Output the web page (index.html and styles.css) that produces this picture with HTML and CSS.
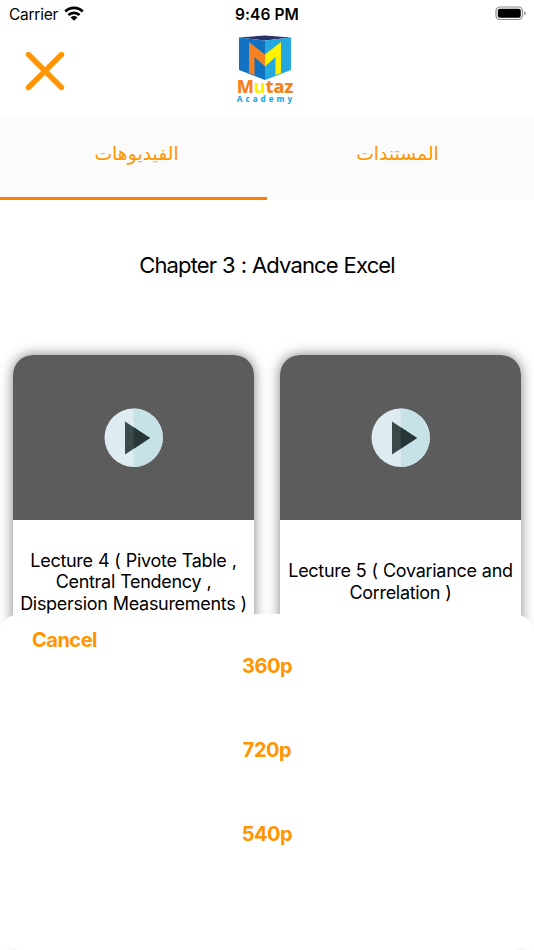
FILE: index.html
```html
<!DOCTYPE html>
<html lang="en">
<head>
  <meta charset="UTF-8" />
  <meta name="viewport" content="width=device-width, initial-scale=1.0"/>
  <title>Mutaz Academy</title>
  <link rel="stylesheet" href="styles.css">
</head>
<body>
<div class="screen">
  <!-- Status bar -->
  <div class="status-bar">
    <div class="carrier">
      <span>Carrier</span>
      <svg class="wifi" width="20" height="15" viewBox="0 0 20 15">
        <g fill="none" stroke="#000" stroke-width="2.8">
          <path d="M1.3 5.5a12.4 12.4 0 0 1 17.4 0"/>
          <path d="M4.4 9.1a8 8 0 0 1 11.2 0"/>
        </g>
        <path d="M6.6 11.4a4.9 4.9 0 0 1 6.8 0L10 14.8z"/>
      </svg>
    </div>
    <div class="time">9:46 PM</div>
    <svg class="battery" width="32" height="15" viewBox="0 0 32 15">
      <rect x="1" y="1" width="26.5" height="12.5" rx="4" fill="none" stroke="#8c8c8c" stroke-width="1.2"/>
      <rect x="2.8" y="2.8" width="23" height="9" rx="2"/>
      <path d="M29.2 5v4.6q1.6-.8 1.6-2.3T29.2 5z" fill="#8c8c8c"/>
    </svg>
  </div>

  <header>
    <button class="close" aria-label="Close">
      <svg width="40" height="40" viewBox="0 0 40 40">
        <path d="M3.5 3.5l33 33M36.5 3.5l-33 33" stroke="#ff9500" stroke-width="5.4" stroke-linecap="round"/>
      </svg>
    </button>
    <div class="logo">
      <svg width="52" height="46" viewBox="0 0 52 46">
        <path d="M0 2.5L26 .5l26 2-26 3z" fill="#2c3168"/>
        <path d="M0 2.5l26 3V45L0 35z" fill="#1272c2"/>
        <path d="M52 2.5l-26 3V45l26-10z" fill="#25a8e0"/>
        <path d="M10 7l16 12.5v12L15.5 22v18L10 38z" fill="#f58220"/>
        <path d="M42 7L26 19.5v12L36.5 22v18l5.5-2z" fill="#fff200"/>
      </svg>
      <div class="logo-name">M<span>u</span>taz</div>
      <div class="logo-sub">Academy</div>
    </div>
  </header>

  <nav>
    <button class="tab active" lang="ar">الفيديوهات</button>
    <button class="tab" lang="ar">المستندات</button>
  </nav>

  <h2>Chapter 3 : Advance Excel</h2>

  <!-- Lectures -->
  <div class="cards">
    <div class="card">
      <div class="thumb">
        <svg width="60" height="60" viewBox="0 0 60 60">
          <circle cx="29.7" cy="29.7" r="29.2" fill="#deebf1"/>
          <path d="M29.7.5a29.2 29.2 0 0 1 0 58.4z" fill="#c7e2e7"/>
          <path d="M21 13.5L46 30 21 46.5z" fill="#3a4a4a"/>
          <path d="M29.7 19.2L46 30 29.7 40.8z" fill="#273636"/>
        </svg>
      </div>
      <p>Lecture 4 ( Pivote Table ,<br/>Central Tendency ,<br/>Dispersion Measurements )</p>
    </div>
    <div class="card">
      <div class="thumb">
        <svg width="60" height="60" viewBox="0 0 60 60">
          <circle cx="29.7" cy="29.7" r="29.2" fill="#deebf1"/>
          <path d="M29.7.5a29.2 29.2 0 0 1 0 58.4z" fill="#c7e2e7"/>
          <path d="M21 13.5L46 30 21 46.5z" fill="#3a4a4a"/>
          <path d="M29.7 19.2L46 30 29.7 40.8z" fill="#273636"/>
        </svg>
      </div>
      <p>Lecture 5 ( Covariance and<br/>Correlation )</p>
    </div>
    <div class="card"></div>
    <div class="card"></div>
  </div>

  <!-- Quality sheet -->
  <div class="sheet">
    <button class="cancel">Cancel</button>
    <button class="quality">360p</button>
    <button class="quality">720p</button>
    <button class="quality">540p</button>
  </div>
</div>
</body>
</html>
```

FILE: styles.css
```css
body {
  margin: 0;
  font-family: Inter, "Liberation Sans", sans-serif;
  background: #fff;
  color: #000;
}
button {
  border: none;
  background: none;
  padding: 0;
  font-family: inherit;
  color: #ff9500;
  cursor: pointer;
}
svg {
  display: block;
}
.screen {
  position: relative;
  width: 534px;
  height: 950px;
  overflow: hidden;
}
.status-bar {
  display: grid;
  grid-template-columns: 1fr auto 1fr;
  align-items: center;
  height: 28px;
  padding: 0 7px 0 9px;
  box-sizing: border-box;
  font-size: 15.5px;
}
.carrier {
  display: flex;
  align-items: center;
  gap: 6px;
  letter-spacing: -0.25px;
}
.wifi {
  margin-bottom: 2px;
}
.time {
  padding-right: 2px;
  font-weight: 600;
  letter-spacing: 0.1px;
}
.battery {
  justify-self: end;
  margin-bottom: 1px;
}
header {
  display: grid;
  grid-template-columns: 1fr auto 1fr;
  height: 88px;
  padding: 0 29px 0 25px;
}
.close {
  justify-self: start;
  align-self: start;
  margin-top: 23px;
}
.logo {
  display: flex;
  flex-direction: column;
  align-items: center;
  width: 60px;
  padding-top: 7px;
}
.logo-name {
  margin-top: -4px;
  font-family: "Noto Sans", sans-serif;
  font-size: 18px;
  font-weight: 800;
  line-height: 18px;
  letter-spacing: -0.1px;
  color: #f58220;
}
.logo-name span {
  color: #fff200;
}
.logo-sub {
  margin-right: -2px;
  font-family: "Noto Sans", sans-serif;
  font-size: 8px;
  font-weight: 800;
  line-height: 8px;
  letter-spacing: 3px;
  color: #25a8e0;
}
nav {
  display: flex;
  height: 84px;
  background: #fbfbfb;
}
.tab {
  flex: 1;
  padding: 0 6px 6px 0;
  border-bottom: 3px solid transparent;
  font-family: "DejaVu Sans", sans-serif;
  font-size: 18.8px;
}
.tab.active {
  padding: 0 0 6px 6px;
  border-bottom-color: #ff7f00;
}
h2 {
  margin: 51px 0 75px;
  font-size: 22px;
  font-weight: 400;
  line-height: 29px;
  letter-spacing: -0.85px;
  word-spacing: 0.5px;
  text-align: center;
}
.cards {
  display: grid;
  grid-template-columns: 1fr 1fr;
  gap: 27px 26px;
  padding: 0 13px;
}
.card {
  height: 566px;
  border-radius: 20px;
  background: #fff;
  box-shadow: 0 0 13px rgba(0,0,0,0.5);
  overflow: hidden;
}
.thumb {
  display: flex;
  align-items: center;
  justify-content: center;
  height: 165px;
  background: #5c5c5c;
}
.card p {
  height: 94px;
  margin: 0;
  padding-top: 29.5px;
  font-size: 18px;
  line-height: 21.5px;
  letter-spacing: -0.3px;
  word-spacing: 0.4px;
  text-align: center;
}
.card:nth-child(2) p {
  padding-top: 40px;
}
.sheet {
  position: absolute;
  left: 0;
  right: 0;
  bottom: 0;
  height: 336px;
  border-radius: 20px;
  background: #fff;
  display: flex;
  flex-direction: column;
}
.cancel {
  align-self: flex-start;
  margin: 14px 0 0 32px;
  font-size: 20px;
  font-weight: 700;
  line-height: 24px;
  letter-spacing: -0.5px;
}
.quality {
  height: 28px;
  margin-bottom: 56px;
  font-size: 20px;
  font-weight: 700;
  line-height: 28px;
  letter-spacing: -0.5px;
}
```
